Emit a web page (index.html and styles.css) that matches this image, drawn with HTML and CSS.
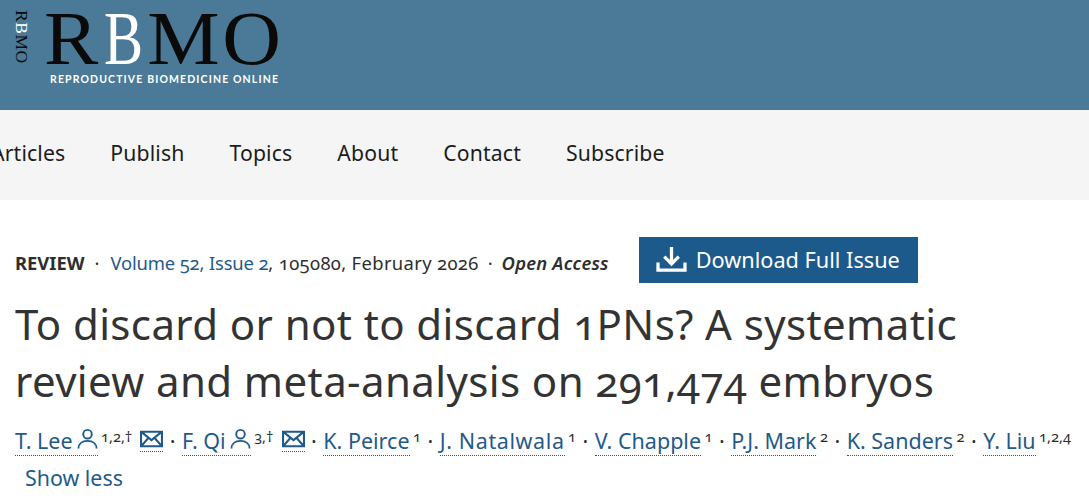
FILE: index.html
```html
<!DOCTYPE html>
<html lang="en">
<head>
<meta charset="utf-8">
<title>RBMO</title>
<link rel="stylesheet" href="styles.css">
</head>
<body>
<header class="banner">
  <div class="side-logo"><span>R</span><span class="white">B</span><span>MO</span></div>
  <div class="logo">
    <div class="logo-mark"><span>R</span><span class="white narrow">B</span><span class="mo">MO</span></div>
    <div class="logo-sub">REPRODUCTIVE BIOMEDICINE ONLINE</div>
  </div>
</header>
<nav class="nav">
  <a>Articles</a><a>Publish</a><a>Topics</a><a>About</a><a>Contact</a><a>Subscribe</a>
</nav>
<main class="article">
  <div class="meta">
    <div class="meta-line">
      <strong>REVIEW</strong><span class="dot dot-first">·</span><a class="link">Volume 52, Issue 2</a><span class="date">, 105080, February 2026</span><span class="dot">·</span><em>Open Access</em>
    </div>
    <a class="download">
      <svg class="download-icon" viewBox="0 0 32 28" aria-hidden="true"><path d="M16 1v17M8.500 11l7.500 7.500 7.500-7.500M2 17v8h28v-8" fill="none" stroke="#fff" stroke-width="3.400"/></svg>
      Download Full Issue
    </a>
  </div>
  <h1 class="title">To discard or not to discard 1PNs? A systematic review and meta-analysis on 291,474 embryos</h1>
  <div class="authors">
    <a class="author">T. Lee<svg class="person" viewBox="0 0 22 22"><circle cx="11" cy="6.500" r="4.500"/><path d="M1.500 21.500c0-5 4-8 9.500-8s9.500 3 9.500 8"/></svg></a><sup>1,2,†</sup><a class="mail"><svg class="env" viewBox="0 0 22 17"><path d="M1 1.500h20v14H1zM1 1.500l10 8 10-8M1 15.500l7-8M21 15.500l-7-8"/></svg></a><span class="sep">·</span>
    <a class="author">F. Qi<svg class="person" viewBox="0 0 22 22"><circle cx="11" cy="6.500" r="4.500"/><path d="M1.500 21.500c0-5 4-8 9.500-8s9.500 3 9.500 8"/></svg></a><sup>3,†</sup><a class="mail"><svg class="env" viewBox="0 0 22 17"><path d="M1 1.500h20v14H1zM1 1.500l10 8 10-8M1 15.500l7-8M21 15.500l-7-8"/></svg></a><span class="sep">·</span>
    <a class="author">K. Peirce</a><sup>1</sup><span class="sep">·</span>
    <a class="author wide">J. Natalwala</a><sup>1</sup><span class="sep">·</span>
    <a class="author">V. Chapple</a><sup>1</sup><span class="sep">·</span>
    <a class="author">P.J. Mark</a><sup>2</sup><span class="sep">·</span>
    <a class="author">K. Sanders</a><sup>2</sup><span class="sep">·</span>
    <a class="author">Y. Liu</a><sup>1,2,4</sup>
  </div>
  <a class="show-less">Show less</a>
</main>
</body>
</html>
```
FILE: styles.css
```css
* { box-sizing: border-box; }
html, body { margin: 0; height: 499px; overflow: hidden; }
body {
  font-family: "Noto Sans", "Open Sans", sans-serif;
  font-feature-settings: "onum";
  color: #2e2e2e;
  background: #fff;
}
.banner {
  height: 110px;
  background: #4a7a97;
  display: flex;
  padding: 10px 0 0 15px;
  gap: 16px;
  color: #0a0a0a;
  font-family: "Liberation Serif", serif;
}
.white { color: #fff; }
.side-logo {
  writing-mode: vertical-rl;
  font-size: 17.500px;
  line-height: 13px;
  height: 54px;
  letter-spacing: 0.500px;
}
.logo { width: 240px; }
.logo-mark {
  font-size: 76px;
  line-height: 56px;
  height: 60px;
  white-space: nowrap;
  display: flex;
  transform: scaleX(1.07);
  transform-origin: left center;
}
.narrow {
  display: inline-block;
  transform: scaleX(0.72);
  transform-origin: center;
  margin: 0 -3px 0 -2px;
}
.mo { letter-spacing: 2.500px; }
.logo-sub {
  font-family: "Lato", sans-serif;
  font-size: 10.500px;
  font-weight: 700;
  letter-spacing: 1.130px;
  color: #fff;
  margin: 3px 0 0 6px;
  white-space: nowrap;
}
.nav {
  height: 90px;
  padding-bottom: 5px;
  background: #f5f5f5;
  display: flex;
  align-items: center;
  gap: 45px;
  font-size: 21.200px;
  letter-spacing: 0.150px;
  color: #1c1c1c;
  overflow: hidden;
}
.nav a:first-child { margin-left: -9px; }
.article { padding: 37px 0 0 15px; }
.meta { display: flex; align-items: center; gap: 30px; height: 46px; }
.meta-line { font-size: 18.400px; white-space: nowrap; padding-top: 5px; }
.meta-line strong { font-weight: 700; }
.meta-line em { font-weight: 600; letter-spacing: 0.200px; }
.dot { margin: 0 9px; }
.dot-first { margin-right: 11px; margin-left: 10px; }
.link { color: #1f5a8a; letter-spacing: -0.150px; }
.date { letter-spacing: 0.350px; }
.download {
  display: flex;
  align-items: center;
  gap: 9px;
  width: 279px;
  height: 46px;
  padding: 0 0 2px 17px;
  background: #1d5a8c;
  color: #fff;
  font-size: 21.700px;
}
.download-icon { width: 31px; height: 27px; }
.title {
  margin: 12px 0 0;
  width: 1000px;
  font-size: 42px;
  line-height: 57px;
  font-weight: 400;
  color: #333;
  letter-spacing: 0.390px;
}
.authors {
  margin-top: 17px;
  font-size: 21.500px;
  line-height: 30px;
  white-space: nowrap;
  display: flex;
  align-items: flex-start;
}
.author {
  color: #1f5a8a;
  border-bottom: 1px dotted #1f5a8a;
  display: inline-flex;
  align-items: center;
  height: 30px;
}
.wide { letter-spacing: 0.600px; }
.person { width: 21px; height: 21px; margin: 0 0 4px 4px; fill: none; stroke: #1f5a8a; stroke-width: 2; }
sup { font-size: 14.600px; line-height: 20px; margin-left: 3.500px; vertical-align: baseline; }
.mail { margin-left: 8px; border-bottom: 1px dotted #1f5a8a; height: 26px; display: inline-flex; align-items: center; }
.env { width: 23px; height: 18px; fill: none; stroke: #1f5a8a; stroke-width: 2; }
.sep { margin: 0 6.500px; }
.show-less { display: block; margin: 7px 0 0 10px; font-size: 21.400px; color: #1f5a8a; }
```
